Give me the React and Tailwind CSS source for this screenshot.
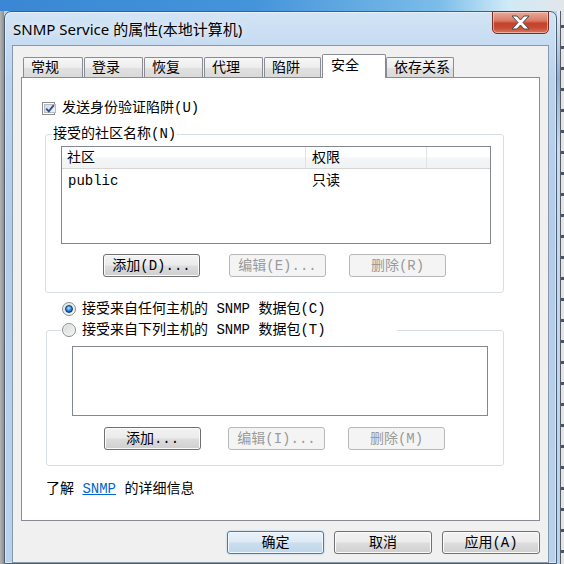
import React from "react";

const fontStack = "font-['Liberation_Mono','Noto_Sans_CJK_SC',monospace] text-[14px] leading-[16px]";
const bodyFont = `${fontStack} text-black`;

// tab widths follow the screenshot, the selected one is wider
const tabs = [
    { label: "常规", cls: "w-[60px]" },
    { label: "登录", cls: "w-[59px]" },
    { label: "恢复", cls: "w-[59px]" },
    { label: "代理", cls: "w-[59px]" },
    { label: "陷阱", cls: "w-[57px]" },
    { label: "安全", cls: "w-[64px]", active: true },
    { label: "依存关系", cls: "w-[68px] -ml-px" },
];

function WinButton({ children, variant = "normal", className = "" }) {
    const styles = {
        normal: "border-[#707070] bg-[linear-gradient(180deg,#f3f3f3_0%,#ebebeb_48%,#dddddd_52%,#cfcfcf_100%)] text-black shadow-[inset_0_0_0_1px_#fbfbfb]",
        disabled: "border-[#b5b9bc] bg-[#f4f4f4] text-[#9a9a9a]",
        primary: "border-[#3c7fb1] bg-[linear-gradient(180deg,#eaf3fa_0%,#dde9f4_48%,#cbdeee_52%,#bfd6ea_100%)] text-black shadow-[inset_0_0_0_1px_#f2f8fd,0_0_2px_#9cc9ec]",
    };
    return (
        <button
            type="button"
            className={`h-[23px] flex items-center justify-center border rounded-[3px] ${fontStack} ${styles[variant]} ${className}`}
        >
            {children}
        </button>
    );
}

function Checkbox() {
    return (
        <span className="w-[13px] h-[13px] border border-[#8e8f8f] bg-white p-[1px] flex">
            <span className="flex-1 border border-[#b7bcc4] bg-[linear-gradient(135deg,#d6dbe1_0%,#f1f3f5_100%)] flex items-center justify-center">
                <svg width="10" height="9" viewBox="0 0 10 9">
                    <path d="M1.2 4.6 L3.8 7.3 L8.8 1.2" fill="none" stroke="#2f4f8f" strokeWidth="1.9" />
                </svg>
            </span>
        </span>
    );
}

function Radio({ checked }) {
    return (
        <span className="w-[14px] h-[14px] shrink-0 rounded-full border border-[#8a8c8e] bg-[linear-gradient(135deg,#d4d6d8_0%,#f6f6f6_100%)] shadow-[inset_0_0_0_1px_#f4f4f4] flex items-center justify-center">
            {checked && (
                <span className="w-[8px] h-[8px] rounded-full border border-[#0f3a72] bg-[radial-gradient(circle_at_45%_35%,#c8eeff_0%,#45a3ec_35%,#0f57b3_75%,#0a326f_100%)]" />
            )}
        </span>
    );
}

function CloseButton() {
    return (
        <div className="w-[57px] h-[23px] -mt-px mr-[7px] rounded-b-[5px] border border-[#7b2d22] bg-[linear-gradient(180deg,#e8aa9c_0%,#db7c66_40%,#c6412a_55%,#c94a33_75%,#d8775f_100%)] shadow-[inset_0_0_0_1px_rgba(255,220,210,0.55)] flex items-center justify-center">
            <svg width="19" height="15" viewBox="-1 -1 19 15">
                <polygon
                    points="0,0 5,0 8.5,4 12,0 17,0 11,6.5 17,13 12,13 8.5,9 5,13 0,13 6,6.5"
                    fill="#ffffff"
                    stroke="#4a4a4a"
                    strokeWidth="1"
                    strokeLinejoin="round"
                />
            </svg>
        </div>
    );
}

export default function App() {
    return (
        <div className="w-[564px] h-[564px] overflow-hidden flex flex-col bg-[#b9d3ec]">
            {/* desktop strip above the window */}
            <div className="h-[11px] shrink-0 bg-[linear-gradient(90deg,#3a86d4_0%,#4594da_45%,#7cbde9_78%,#cfeaf7_90%,#e2e6ea_100%)]" />

            <div className="flex flex-1">
                {/* left edge of desktop */}
                <div className="w-[4px] bg-[linear-gradient(90deg,#b4b4b4,#8e8e8e)]" />

                {/* WINDOW */}
                <div className="w-[553px] h-[553px] shrink-0 rounded-t-[7px] border border-[#4d5d70] bg-[linear-gradient(180deg,#d2e4f5_0%,#bad3ed_12%,#b3cde9_40%,#b9d2ec_100%)] shadow-[inset_0_0_0_1px_rgba(255,255,255,0.45)] flex flex-col">
                    {/* title bar */}
                    <div className="h-[33px] flex items-start justify-between">
                        <span className="pl-[8px] pt-[7px] text-[15px] leading-[20px] font-['Noto_Sans','Noto_Sans_CJK_SC',sans-serif] text-black [text-shadow:0_0_8px_rgba(255,255,255,0.9)]">
                            SNMP Service 的属性(本地计算机)
                        </span>
                        <CloseButton />
                    </div>

                    {/* client area */}
                    <div className={`ml-[7px] w-[537px] h-[518px] border border-[#8798ac] bg-[#f0f0f0] flex flex-col ${bodyFont}`}>
                        {/* TABS */}
                        <div className="h-[32px] pl-[10px] flex items-end gap-px">
                            {tabs.map((tab) =>
                                tab.active ? (
                                    <div
                                        key={tab.label}
                                        className={`${tab.cls} h-[24px] relative z-10 bg-white border border-[#898c95] border-b-0 rounded-t-[2px] flex items-center pl-[8px] pb-[2px]`}
                                    >
                                        {tab.label}
                                    </div>
                                ) : (
                                    <div
                                        key={tab.label}
                                        className={`${tab.cls} h-[21px] border border-[#898c95] border-b-0 rounded-t-[2px] bg-[linear-gradient(180deg,#f7f7f7_0%,#ececec_50%,#e0e0e0_52%,#d9d9d9_100%)] flex items-center pl-[7px]`}
                                    >
                                        {tab.label}
                                    </div>
                                )
                            )}
                        </div>

                        {/* TAB PAGE */}
                        <div className="-mt-px ml-[8px] w-[519px] h-[444px] border border-[#898c95] bg-white flex flex-col">
                            <div className="mt-[22px] ml-[20px] h-[16px] flex items-center gap-[7px]">
                                <Checkbox />
                                <span>发送身份验证陷阱(U)</span>
                            </div>

                            {/* community names */}
                            <fieldset className="mt-[10px] ml-[23px] w-[459px] border border-[#d5dfe5] rounded-[3px] pb-[15px]">
                                <legend className="ml-[6px] px-[1px] leading-[16px]">接受的社区名称(N)</legend>
                                <div className="mt-[4px] ml-[15px] w-[430px] h-[98px] border border-[#828790] bg-white">
                                    <div className="h-[22px] flex border-b border-[#d5d5d5] bg-[linear-gradient(180deg,#ffffff_0%,#ffffff_45%,#f4f5f7_55%,#f1f2f4_100%)]">
                                        <div className="w-[244px] pl-[5px] flex items-center border-r border-[#e0e2e6]">社区</div>
                                        <div className="w-[121px] pl-[6px] flex items-center border-r border-[#e0e2e6]">权限</div>
                                        <div className="flex-1" />
                                    </div>
                                    <div className="flex pt-[4px]">
                                        <div className="w-[244px] pl-[6px]">public</div>
                                        <div className="pl-[6px]">只读</div>
                                    </div>
                                </div>
                                <div className="mt-[10px] ml-[57px] flex">
                                    <WinButton className="w-[97px]">添加(D)...</WinButton>
                                    <WinButton variant="disabled" className="ml-[29px] w-[97px]">编辑(E)...</WinButton>
                                    <WinButton variant="disabled" className="ml-[23px] w-[97px]">删除(R)</WinButton>
                                </div>
                            </fieldset>

                            <div className="mt-[8px] ml-[40px] h-[16px] flex items-center gap-[6px]">
                                <Radio checked />
                                <span>接受来自任何主机的 SNMP 数据包(C)</span>
                            </div>

                            {/* hosts list */}
                            <fieldset className="mt-[5px] ml-[24px] w-[458px] border border-[#d5dfe5] rounded-[3px] pb-[15px]">
                                <legend className="ml-[14px] pl-[1px] w-[336px] h-[16px] flex items-center gap-[6px]">
                                    <Radio />
                                    <span>接受来自下列主机的 SNMP 数据包(T)</span>
                                </legend>
                                <div className="mt-[8px] ml-[25px] w-[416px] h-[70px] border border-[#828790] bg-white" />
                                <div className="mt-[11px] ml-[57px] flex">
                                    <WinButton className="w-[97px]">添加...</WinButton>
                                    <WinButton variant="disabled" className="ml-[27px] w-[97px]">编辑(I)...</WinButton>
                                    <WinButton variant="disabled" className="ml-[23px] w-[97px]">删除(M)</WinButton>
                                </div>
                            </fieldset>

                            <p className="mt-[15px] ml-[24px]">
                                了解 <span className="text-[#0066cc] underline">SNMP</span> 的详细信息
                            </p>
                        </div>

                        {/* dialog buttons */}
                        <div className="mt-[10px] ml-[214px] flex">
                            <WinButton variant="primary" className="w-[97px]">确定</WinButton>
                            <WinButton className="ml-[10px] w-[98px]">取消</WinButton>
                            <WinButton className="ml-[10px] w-[98px]">应用(A)</WinButton>
                        </div>
                    </div>
                </div>

                {/* right edge of desktop */}
                <div className="flex-1 flex">
                    <div className="w-[3px] bg-[linear-gradient(180deg,#e4eef7_0%,#8fb0d2_12%,#c6dcf1_25%,#b7d3ee_100%)]" />
                    <div className="w-px bg-[#5c5c5c]" />
                    <div className="flex-1 bg-[repeating-linear-gradient(180deg,#dfe6ee_0px,#dfe6ee_14px,#4a5568_14px,#4a5568_17px,#dfe6ee_17px,#dfe6ee_21px)]" />
                </div>
            </div>
        </div>
    );
}
